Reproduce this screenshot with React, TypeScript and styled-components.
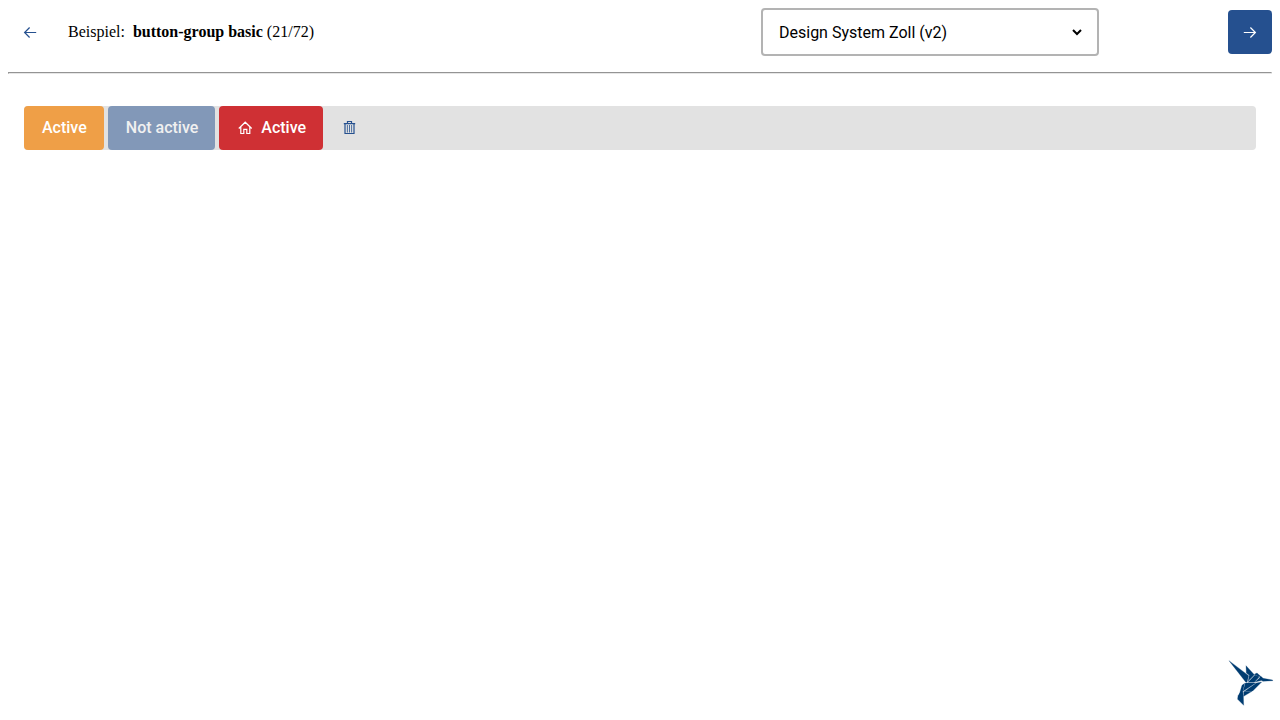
import React from "react";
import styled, { createGlobalStyle } from "styled-components";

const GlobalStyle = createGlobalStyle`
  *, *::before, *::after { box-sizing: border-box; }
  body {
    margin: 8px;
    background: #fff;
    color: #000;
    font: 16px/20px "Liberation Serif", "Times New Roman", serif;
  }
`;

const Header = styled.header`
  display: flex;
  align-items: center;
  min-height: 48px;
`;

const Title = styled.div`
  display: flex;
  flex: 1;
  align-items: center;
  gap: 16px;
`;

const Label = styled.span`
  margin-right: 8px;
`;

const SelectField = styled.div`
  display: grid;
  flex: 0 1 338px;
  min-width: 0;
  align-items: center;
`;

const ThemeSelect = styled.select`
  grid-area: 1 / 1;
  width: 100%;
  height: 48px;
  padding: 2px 32px 0 16px;
  border: 2px solid #b3b3b3;
  border-radius: 4px;
  appearance: none;
  background: #fff;
  color: #000;
  font: 16px/20px Roboto, sans-serif;
`;

const Chevron = styled.svg`
  grid-area: 1 / 1;
  justify-self: end;
  width: 12px;
  height: 8px;
  margin-right: 16px;
  fill: none;
  stroke: #000;
  stroke-width: 2;
  pointer-events: none;
`;

const NextSlot = styled.div`
  display: flex;
  flex: 0 1 173px;
  justify-content: flex-end;
`;

type Variant = "primary" | "secondary" | "danger" | "ghost";

const fills: Record<Variant, string> = {
  primary: "#25508f",
  secondary: "#ef9f47",
  danger: "#cf3034",
  ghost: "transparent",
};

const Button = styled.button<{ $variant: Variant; $square?: boolean }>`
  display: inline-flex;
  align-items: center;
  justify-content: center;
  gap: 8px;
  height: 44px;
  min-width: 44px;
  padding: ${(p) => (p.$square ? "0" : "0 17px 0 18px")};
  border: 0;
  border-radius: 4px;
  background: ${(p) => fills[p.$variant]};
  color: ${(p) => (p.$variant === "ghost" ? "#25508f" : "#fff")};
  font: 500 16px/20px Roboto, sans-serif;
  white-space: nowrap;
  cursor: pointer;

  &:disabled {
    opacity: 0.5;
    cursor: default;
  }
`;

const Rule = styled.hr`
  height: 2px;
  margin: 16px 0;
  border: 1px solid;
  border-color: #949494 #e6e6e6 #e6e6e6 #949494;
`;

const Main = styled.main`
  padding: 16px;
`;

const ButtonGroup = styled.div`
  display: flex;
  flex-wrap: wrap;
  gap: 4px;
  border-radius: 4px;
  background: #e2e2e2;
`;

const Icon = styled.svg`
  width: 16px;
  height: 16px;
  fill: none;
  stroke: currentColor;
  stroke-width: 1.2;
`;

const Bird = styled.svg`
  position: fixed;
  right: 0;
  bottom: 9px;
  width: 58px;
  height: 56px;
  fill: #003c71;
  stroke: #003c71;
  stroke-width: 0.8;
`;

const ArrowIcon = ({ back }: { back?: boolean }) => (
  <Icon viewBox="0 0 16 16" aria-hidden="true">
    {back ? (
      <path d="M14.2 8.5H2.8M7.6 3.5l-5 5 5 5" />
    ) : (
      <path d="M1.8 8.5h11.4M8.4 3.5l5 5-5 5" />
    )}
  </Icon>
);

const HomeIcon = () => (
  <Icon viewBox="0 0 16 16" aria-hidden="true">
    <path d="M1.8 8.5L8.2 2.2l6.5 6.3M3.8 7v6.5h3V9.3h3v4.2h3V7" />
  </Icon>
);

const TrashIcon = () => (
  <Icon viewBox="0 0 16 16" aria-hidden="true">
    <path d="M2.8 3.6h11.4M6.5 3.5v-2h4v2M4 3.5v10h9v-10" />
    <path d="M6.4 5v7.5M8.5 5v7.5M10.6 5v7.5" strokeWidth="0.8" />
  </Icon>
);

export default function App() {
  return (
    <>
      <GlobalStyle />
      <Header>
        <Title>
          <Button $variant="ghost" $square aria-label="Zurück">
            <ArrowIcon back />
          </Button>
          <span>
            <Label>Beispiel:</Label>
            <b>button-group basic</b> (21/72)
          </span>
        </Title>
        <SelectField>
          <ThemeSelect aria-label="Theme">
            <option>Design System Zoll (v2)</option>
          </ThemeSelect>
          <Chevron viewBox="0 0 12 8" aria-hidden="true">
            <path d="M2 2l4 4 4-4" />
          </Chevron>
        </SelectField>
        <NextSlot>
          <Button $variant="primary" $square aria-label="Weiter">
            <ArrowIcon />
          </Button>
        </NextSlot>
      </Header>
      <Rule />
      <Main>
        <ButtonGroup role="group">
          <Button $variant="secondary">Active</Button>
          <Button $variant="primary" disabled>
            Not active
          </Button>
          <Button $variant="danger">
            <HomeIcon />
            Active
          </Button>
          <Button $variant="ghost" $square aria-label="Löschen">
            <TrashIcon />
          </Button>
        </ButtonGroup>
      </Main>
      <Bird viewBox="0 0 174 168" role="img" aria-label="KoliBri">
        <path d="M21 17L80 62L75 82L71 81Z" />
        <path d="M72 32L97 59L78 79L82 61L73 54Z" />
        <path d="M99 60L112 65L97 82L78 82Z" />
        <path d="M97 58L105 54L116 64L108 64Z" />
        <path d="M116 66L124 75L99 81Z" />
        <path d="M112 65Q117 61 123 70L152 75L152 77L122 79Z" />
        <path d="M70 84L101 84L63 109Z" />
        <path d="M103 84L119 81L92 108L66 110Z" />
        <path d="M60 91L68 85L62 110L63 122L48 131Z" />
        <path d="M65 111L90 109L65 124Z" />
        <path d="M48 122L60 106L64 122L65 151L47 133Z" />
      </Bird>
    </>
  );
}
